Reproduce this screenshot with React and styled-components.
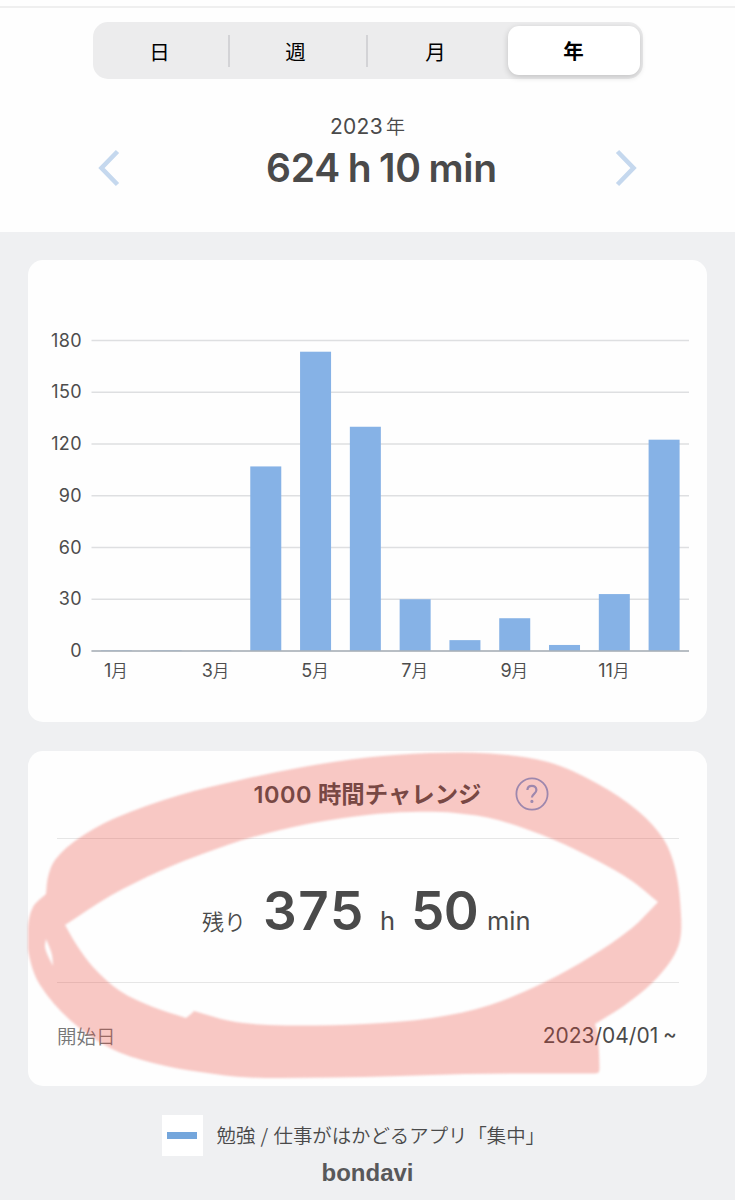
import React from "react";
import styled, { createGlobalStyle } from 'styled-components';

const GlobalStyle = createGlobalStyle`
    * {
        box-sizing: border-box;
    }
    body {
        margin: 0;
        background-color: #eff0f2;
        color: #4a4a4a;
        font-family: Inter, "Noto Sans CJK JP", sans-serif;
    }
`;

const Page = styled.div`
    display: flex;
    flex-direction: column;
    width: 735px;
    height: 1200px;
    overflow: hidden;
    background-color: #eff0f2;
`;

const Header = styled.header`
    display: flex;
    flex-direction: column;
    align-items: center;
    height: 232px;
    padding-top: 6px;
    background-color: #fefefe;
`;

const TopLine = styled.div`
    width: 100%;
    height: 2px;
    margin-bottom: 14px;
    background-color: #efefef;
`;

const Tabs = styled.div`
    display: grid;
    grid-template-columns: 134px 138px 140px 132px;
    align-items: center;
    width: 550px;
    height: 57px;
    padding: 3px;
    border-radius: 15px;
    background-color: #ececed;
`;

const Tab = styled.button`
    display: flex;
    align-items: center;
    justify-content: center;
    height: ${props => props.$active ? '49px' : '32px'};
    padding: ${props => props.$active ? '0 0 2px' : '0 4px 0 0'};
    border: 0;
    border-right: ${props => props.$line ? '2px solid #d3d3d6' : '0'};
    border-radius: ${props => props.$active ? '11px' : '0'};
    background: ${props => props.$active ? '#fff' : 'none'};
    box-shadow: ${props => props.$active ? '0 2px 6px rgba(0, 0, 0, .18)' : 'none'};
    color: #000;
    font-family: "Noto Sans CJK JP", sans-serif;
    font-size: 20.5px;
    font-weight: ${props => props.$active ? 700 : 400};
`;

const Period = styled.div`
    display: flex;
    align-items: center;
    justify-content: space-between;
    width: 541px;
    margin-top: 32px;
`;

const Arrow = styled.svg`
    width: 24px;
    height: 40px;
    margin-top: 29px;
    fill: none;
    stroke: #c5d8ee;
    stroke-width: 4.6;
`;

const Summary = styled.div`
    text-align: center;
`;

const Year = styled.div`
    height: 30px;
    line-height: 29px;
    font-size: 21px;
    letter-spacing: .3px;
`;

const Kanji = styled.span`
    margin-left: ${props => props.$gap || 0}px;
    font-family: "Noto Sans CJK JP", sans-serif;
    font-size: ${props => props.$size}px;
    font-weight: ${props => props.$weight || 350};
    letter-spacing: 0;
`;

const Total = styled.div`
    height: 54px;
    padding-left: 28px;
    line-height: 54px;
    font-size: 39px;
    font-weight: 600;
    letter-spacing: -.2px;
    word-spacing: -2px;
    white-space: nowrap;
`;

const Card = styled.section`
    position: relative;
    width: 679px;
    height: ${props => props.$height}px;
    margin: ${props => props.$top}px 0 0 28px;
    border-radius: 15px;
    background-color: #fefefe;
`;

const Chart = styled.svg`
    display: block;
    width: 679px;
    height: 462px;
`;

const AxisText = styled.text`
    fill: #4d4d4d;
    font-size: 18px;
    letter-spacing: ${props => props.$space || 0}px;
`;

const Challenge = styled(Card)`
    display: flex;
    flex-direction: column;
    padding: 0 28px 0 29px;
`;

const CardHead = styled.div`
    display: flex;
    align-items: center;
    height: 88px;
    padding: 0 0 2px 196.5px;
    border-bottom: 1.5px solid #e6e6e6;
`;

const Title = styled.h2`
    width: 261.5px;
    margin: 0;
    font-size: 23.5px;
    font-weight: 600;
    line-height: 34px;
    letter-spacing: .5px;
    white-space: nowrap;
`;

const Help = styled.svg`
    width: 34px;
    height: 34px;
    fill: none;
    stroke: #7fa3de;
    stroke-width: 1.8;
`;

const Remaining = styled.div`
    display: flex;
    align-items: baseline;
    height: 144px;
    padding: 39px 0 0 145px;
    border-bottom: 1.5px solid #e6e6e6;
    line-height: 66px;
`;

const Big = styled.span`
    width: ${props => props.$width}px;
    font-size: 53px;
    font-weight: 600;
    letter-spacing: ${props => props.$space}px;
`;

const Unit = styled.span`
    width: ${props => props.$width}px;
    font-size: 25.5px;
`;

const Label = styled.span`
    width: 61px;
    font-family: "Noto Sans CJK JP", sans-serif;
    font-size: 22px;
    font-weight: 350;
`;

const StartRow = styled.div`
    display: flex;
    align-items: center;
    justify-content: space-between;
    height: 103px;
    padding: 2px 2px 0 0;
    font-size: 21px;
    word-spacing: -1px;
`;

const StartLabel = styled(Kanji)`
    color: #777;
`;

const Marker = styled.svg`
    position: absolute;
    top: 0;
    left: 0;
    width: 679px;
    height: 335px;
    fill: rgba(234, 69, 55, .29);
    fill-rule: evenodd;
    filter: blur(.8px);
    pointer-events: none;
`;

const Footer = styled.footer`
    display: flex;
    flex-direction: column;
    align-items: center;
    padding-top: 29px;
`;

const AppLine = styled.div`
    display: flex;
    align-items: center;
    width: 412px;
    height: 41px;
    white-space: nowrap;
`;

const AppName = styled(Kanji)`
    padding-bottom: 2px;
    word-spacing: 1px;
`;

const AppIcon = styled.div`
    display: flex;
    align-items: center;
    justify-content: center;
    width: 41px;
    height: 41px;
    margin-right: 14px;
    background-color: #fff;

    &::before {
        content: "";
        width: 30px;
        height: 7px;
        background-color: #74a6dc;
    }
`;

const Brand = styled.div`
    color: #58585a;
    font-family: "Liberation Sans", Arial, sans-serif;
    font-size: 24px;
    font-weight: 700;
    line-height: 34px;
`;

const tabs = ['日', '週', '月', '年'];
const hours = [0.3, 0.3, 0.3, 107, 173.5, 130, 30, 6.3, 19, 3.5, 33, 122.5];
const ticks = [0, 30, 60, 90, 120, 150, 180];

// chart area inside the card
const LEFT = 63.5;
const RIGHT = 661;
const BASE = 391;
const UNIT = 51.75 / 30;
const STEP = (RIGHT - LEFT) / 12;

function BarChart() {
    return (
        <Chart viewBox="0 0 679 462">
            {ticks.map(t => (
            <g key={t}>
                <line x1={LEFT} x2={RIGHT} y1={BASE - t * UNIT} y2={BASE - t * UNIT} stroke="#dedfe1" strokeWidth="1.5" />
                <AxisText x="54" y={BASE - t * UNIT + 6} textAnchor="end" $space={.4}>{t}</AxisText>
            </g>
            ))}
            {hours.map((h, i) => (
            <rect key={i} x={LEFT + STEP * (i + .5) - 15.5} y={BASE - h * UNIT} width="31" height={h * UNIT} fill="#86b2e6" />
            ))}
            <line x1={LEFT} x2={RIGHT} y1={BASE} y2={BASE} stroke="#a9b0b8" strokeWidth="1.5" />
            {hours.map((h, i) => i % 2 === 0 && (
            <AxisText key={i} x={LEFT + STEP * (i + .5) - .5} y="416.5" textAnchor="middle">
                {i + 1}<tspan fontFamily="Noto Sans CJK JP" fontSize="16.5" fontWeight="350">月</tspan>
            </AxisText>
            ))}
        </Chart>
    )
}

// runs a smooth curve through the points, each handle a third of its segment
function curve(points) {
    const tangent = i => {
        const a = points[Math.max(i - 1, 0)];
        const b = points[Math.min(i + 1, points.length - 1)];
        const len = Math.hypot(b[0] - a[0], b[1] - a[1]);
        return [(b[0] - a[0]) / len, (b[1] - a[1]) / len];
    };
    let d = '';
    for (let i = 0; i < points.length - 1; i++) {
        const [x1, y1] = points[i];
        const [x2, y2] = points[i + 1];
        const h = Math.hypot(x2 - x1, y2 - y1) / 3;
        const s = tangent(i);
        const e = tangent(i + 1);
        d += `C${x1 + s[0] * h} ${y1 + s[1] * h} ${x2 - e[0] * h} ${y2 - e[1] * h} ${x2} ${y2}`;
    }
    return d;
}

const shape = parts => `M${parts[0][0].join(' ')}${parts.map(curve).join('')}Z`;

const outer = shape([
    [[46, 894], [48, 877], [55, 860], [75, 841], [113, 819], [180, 795], [240, 780], [303, 767], [367, 757.5], [430, 753], [490, 753.5], [548, 762], [598, 784], [638, 811], [664, 840], [676, 872], [681, 915], [680, 940], [672, 959], [652, 983], [625, 1005], [595, 1024]],
    [[595, 1024], [597.5, 1034], [599, 1052], [599.5, 1069]],
    [[599.5, 1069], [598.5, 1072.5], [595, 1073.5]],
    [[595, 1073.5], [530, 1073.5], [465, 1074], [400, 1076], [330, 1077.5], [250, 1077.5], [200, 1072], [153, 1063], [110, 1048], [70, 1020], [40, 985], [29, 955], [28, 927], [33, 907], [46, 894]],
]);

const inner = shape([
    [[65, 925], [110, 896], [160, 871], [205, 853], [253, 837], [310, 823.5], [367, 815], [412, 812], [455, 813], [498, 820], [552, 839], [598, 861], [632, 881], [658, 902]],
    [[658, 902], [632, 928], [590, 957], [545, 982], [490, 1005], [432, 1018], [365, 1024], [300, 1025.5], [260, 1024.5], [228, 1020.5], [194, 1011]],
    [[194, 1011], [191, 1014], [186, 1018]],
    [[186, 1018], [153, 1007], [120, 991], [93, 967], [76, 944], [65, 925]],
]);

const gap = shape([
    [[46, 939], [49, 946], [52, 955], [53, 966]],
    [[53, 966], [48, 956], [45, 947], [46, 939]],
]);

function App() {
    return (
    <>
     <GlobalStyle />
     <Page>
        <Header>
            <TopLine />
            <Tabs>
                {tabs.map((tab, i) => (
                <Tab key={tab} $active={i === 3} $line={i < 2}>{tab}</Tab>
                ))}
            </Tabs>
            <Period>
                <Arrow viewBox="0 0 24 40"><path d="M20.5 3.5 4.5 20l16 16.5" /></Arrow>
                <Summary>
                    <Year>2023<Kanji $size={19} $gap={3}>年</Kanji></Year>
                    <Total>624 h 10 min</Total>
                </Summary>
                <Arrow viewBox="0 0 24 40"><path d="M3.5 3.5 19.5 20l-16 16.5" /></Arrow>
            </Period>
        </Header>

        <Card $height={462} $top={28}>
            <BarChart />
        </Card>

        <Challenge $height={335} $top={29}>
            <CardHead>
                <Title>1000<Kanji $size={23.4} $gap={6} $weight={700}>時間チャレンジ</Kanji></Title>
                <Help viewBox="0 0 34 34">
                    <circle cx="17" cy="17" r="15.6" />
                    <path d="M12.4 13c.1-2.700 2-4.200 4.500-4.200s4.500 1.600 4.500 4.200c0 3.700-4.500 3.900-4.500 7.600" strokeWidth="2.200" />
                    <circle cx="16.9" cy="24.4" r=".7" />
                </Help>
            </CardHead>
            <Remaining>
                <Label>残り</Label>
                <Big $width={117} $space={1.6}>375</Big>
                <Unit $width={31}>h</Unit>
                <Big $width={76} $space={-.5}>50</Big>
                <Unit $width={50}>min</Unit>
            </Remaining>
            <StartRow>
                <StartLabel $size={19.5}>開始日</StartLabel>
                <span>2023/04/01 ~</span>
            </StartRow>
            <Marker viewBox="28 751 679 335">
                <path d={outer + inner + gap} />
            </Marker>
        </Challenge>

        <Footer>
            <AppLine>
                <AppIcon />
                <AppName $size={19.4}>勉強 / 仕事がはかどるアプリ「集中」</AppName>
            </AppLine>
            <Brand>bondavi</Brand>
        </Footer>
     </Page>
    </>
    )
};

export default App;
